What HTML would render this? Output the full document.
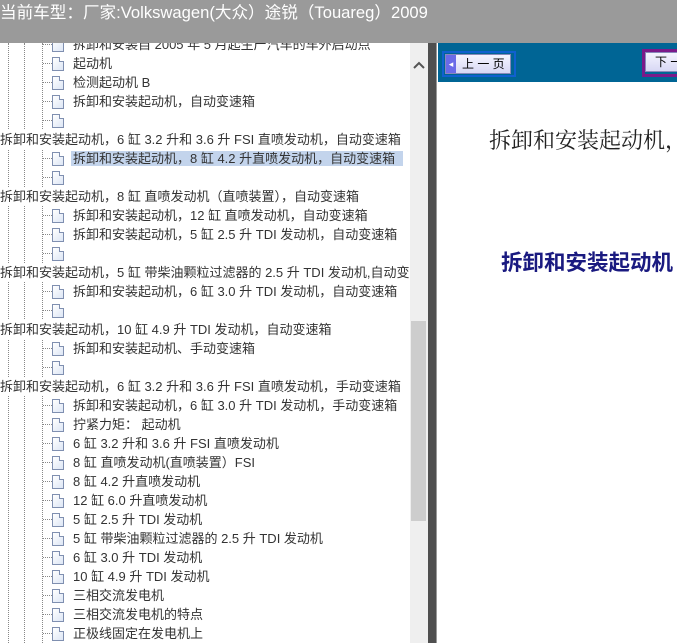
<!DOCTYPE html>
<html><head><meta charset="utf-8"><style>
*{margin:0;padding:0;box-sizing:border-box}
body{width:677px;height:643px;overflow:hidden;background:#fff;font-family:"Liberation Sans","Noto Sans CJK SC",sans-serif;position:relative}
#title{position:absolute;left:0;top:0;width:677px;height:43px;background:#9a9a9a;color:#fff;font-size:16.6px;line-height:26px;padding-left:0;white-space:nowrap}
#tree{position:absolute;left:0;top:43px;width:410px;height:600px;overflow:hidden;background:#fff}
.vl{position:absolute;top:0;height:600px;border-left:1px dotted #888}
.r{position:absolute;left:0;height:19px;font-size:13px;line-height:19px;color:#333;white-space:nowrap}
.r.c{left:73px}
.r.c:before{content:"";position:absolute;left:-30px;top:9px;width:9px;border-top:1px dotted #888}
.ic{position:absolute;left:-21px;top:3px;width:12px;height:14px;border:1px solid #7f8fb0;background:linear-gradient(135deg,#fff,#dde6f5);}
.ic:after{content:"";position:absolute;right:-1px;top:-1px;width:4px;height:4px;background:#fff;border-left:1px solid #7f8fb0;border-bottom:1px solid #7f8fb0}
.sel{background:#c3d4ec;padding-right:8px;margin-left:-2px;padding-left:2px}
#sb{position:absolute;left:410px;top:43px;width:18px;height:600px;background:#efefef}
#thumb{position:absolute;left:411px;top:321px;width:15px;height:200px;background:#cdcdcd}
#div{position:absolute;left:428px;top:43px;width:9px;height:600px;background:#4f4f4f;border-right:1px solid #999}
#hdr{position:absolute;left:438px;top:43px;width:239px;height:39px;background:#006595;overflow:hidden}
.btn{position:absolute;height:20px;background:linear-gradient(#f4f4ff,#d8d8f4);border:1px solid #8888bb;font-size:12px;line-height:18px;color:#000;white-space:nowrap}
</style></head><body>
<div id="title">当前车型：厂家:Volkswagen(大众）途锐（Touareg）2009</div>
<div id="tree">
<div class="vl" style="left:8px"></div><div class="vl" style="left:24px"></div><div class="vl" style="left:42px"></div>
<div class="r c" style="top:-8px"><span class="ic"></span>拆卸和安装自 2005 年 5 月起生产汽车的车外启动点</div>
<div class="r c" style="top:11px"><span class="ic"></span>起动机</div>
<div class="r c" style="top:30px"><span class="ic"></span>检测起动机 B</div>
<div class="r c" style="top:49px"><span class="ic"></span>拆卸和安装起动机，自动变速箱</div>
<div class="r c" style="top:68px"><span class="ic"></span></div>
<div class="r" style="top:87px;background:#fff">拆卸和安装起动机，6 缸 3.2 升和 3.6 升 FSI 直喷发动机，自动变速箱</div>
<div class="r c" style="top:106px"><span class="ic"></span><span class="sel">拆卸和安装起动机，8 缸 4.2 升直喷发动机，自动变速箱</span></div>
<div class="r c" style="top:125px"><span class="ic"></span></div>
<div class="r" style="top:144px;background:#fff">拆卸和安装起动机，8 缸 直喷发动机（直喷装置），自动变速箱</div>
<div class="r c" style="top:163px"><span class="ic"></span>拆卸和安装起动机，12 缸 直喷发动机，自动变速箱</div>
<div class="r c" style="top:182px"><span class="ic"></span>拆卸和安装起动机，5 缸 2.5 升 TDI 发动机，自动变速箱</div>
<div class="r c" style="top:201px"><span class="ic"></span></div>
<div class="r" style="top:220px;background:#fff">拆卸和安装起动机，5 缸 带柴油颗粒过滤器的 2.5 升 TDI 发动机,自动变速箱</div>
<div class="r c" style="top:239px"><span class="ic"></span>拆卸和安装起动机，6 缸 3.0 升 TDI 发动机，自动变速箱</div>
<div class="r c" style="top:258px"><span class="ic"></span></div>
<div class="r" style="top:277px;background:#fff">拆卸和安装起动机，10 缸 4.9 升 TDI 发动机，自动变速箱</div>
<div class="r c" style="top:296px"><span class="ic"></span>拆卸和安装起动机、手动变速箱</div>
<div class="r c" style="top:315px"><span class="ic"></span></div>
<div class="r" style="top:334px;background:#fff">拆卸和安装起动机，6 缸 3.2 升和 3.6 升 FSI 直喷发动机，手动变速箱</div>
<div class="r c" style="top:353px"><span class="ic"></span>拆卸和安装起动机，6 缸 3.0 升 TDI 发动机，手动变速箱</div>
<div class="r c" style="top:372px"><span class="ic"></span>拧紧力矩： 起动机</div>
<div class="r c" style="top:391px"><span class="ic"></span>6 缸 3.2 升和 3.6 升 FSI 直喷发动机</div>
<div class="r c" style="top:410px"><span class="ic"></span>8 缸 直喷发动机(直喷装置）FSI</div>
<div class="r c" style="top:429px"><span class="ic"></span>8 缸 4.2 升直喷发动机</div>
<div class="r c" style="top:448px"><span class="ic"></span>12 缸 6.0 升直喷发动机</div>
<div class="r c" style="top:467px"><span class="ic"></span>5 缸 2.5 升 TDI 发动机</div>
<div class="r c" style="top:486px"><span class="ic"></span>5 缸 带柴油颗粒过滤器的 2.5 升 TDI 发动机</div>
<div class="r c" style="top:505px"><span class="ic"></span>6 缸 3.0 升 TDI 发动机</div>
<div class="r c" style="top:524px"><span class="ic"></span>10 缸 4.9 升 TDI 发动机</div>
<div class="r c" style="top:543px"><span class="ic"></span>三相交流发电机</div>
<div class="r c" style="top:562px"><span class="ic"></span>三相交流发电机的特点</div>
<div class="r c" style="top:581px"><span class="ic"></span>正极线固定在发电机上</div>
</div>
<div id="sb"><svg width="18" height="20" style="position:absolute;top:12px"><path d="M4 13 L9 8 L14 13" stroke="#555" stroke-width="2" fill="none"/></svg></div>
<div id="thumb"></div>
<div id="div"></div>
<div id="hdr">
<div style="position:absolute;left:4px;top:8px;width:74px;height:26px;border:2px solid #1060d0"></div>
<div class="btn" style="left:7px;top:11px;width:66px;padding-left:16px"><span style="position:absolute;left:0;top:0;width:10px;height:18px;background:#6a6ae8;color:#fff;font-size:9px;line-height:18px;text-align:center">◂</span>上 一 页</div>
<div style="position:absolute;left:204px;top:6px;width:60px;height:28px;border:3px solid #7a1a8a"></div>
<div class="btn" style="left:207px;top:9px;width:60px;padding-left:9px">下 一 页</div>
</div>
<div style="position:absolute;left:489px;top:124px;font-family:'Liberation Serif','Noto Serif CJK SC',serif;font-size:22px;color:#222;white-space:nowrap">拆卸和安装起动机，</div>
<div style="position:absolute;left:501px;top:246px;font-size:21.5px;font-weight:bold;color:#1a1a80;white-space:nowrap">拆卸和安装起动机</div>
</body></html>
